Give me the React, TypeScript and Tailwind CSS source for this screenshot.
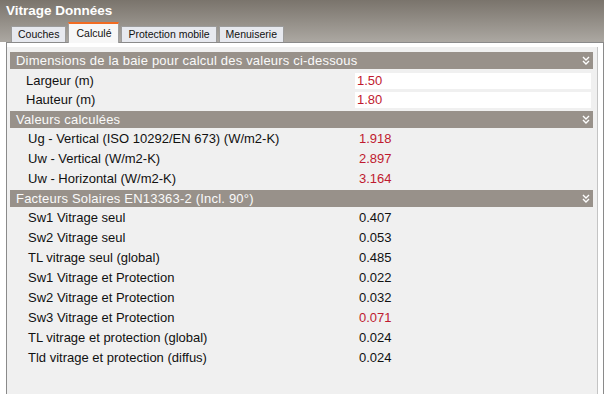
const font = "font-['Liberation_Sans',Arial,sans-serif]";

const tabs = ["Couches", "Calculé", "Protection mobile", "Menuiserie"];

const dimensions = [
  { label: "Largeur (m)", value: "1.50" },
  { label: "Hauteur (m)", value: "1.80" },
];

const calculated = [
  { label: "Ug - Vertical (ISO 10292/EN 673) (W/m2-K)", value: "1.918", red: true },
  { label: "Uw - Vertical (W/m2-K)", value: "2.897", red: true },
  { label: "Uw - Horizontal (W/m2-K)", value: "3.164", red: true },
];

const solar = [
  { label: "Sw1 Vitrage seul", value: "0.407" },
  { label: "Sw2 Vitrage seul", value: "0.053" },
  { label: "TL vitrage seul (global)", value: "0.485" },
  { label: "Sw1 Vitrage et Protection", value: "0.022" },
  { label: "Sw2 Vitrage et Protection", value: "0.032" },
  { label: "Sw3 Vitrage et Protection", value: "0.071", red: true },
  { label: "TL vitrage et protection (global)", value: "0.024" },
  { label: "Tld vitrage et protection (diffus)", value: "0.024" },
];

function Chevron() {
  return (
    <svg width="8" height="9" viewBox="0 0 8 9" className="shrink-0">
      <path d="M1 1 L4 4 L7 1 M1 5 L4 8 L7 5" fill="none" stroke="#fff" strokeWidth="1.4" />
    </svg>
  );
}

function Header({ title }: { title: string }) {
  return (
    <div className="h-[17px] bg-[#98918a] flex items-center justify-between pl-[6px] pr-[3px]">
      <span className="text-[13px] leading-none text-[#fafafa] tracking-[0.2px] whitespace-nowrap">{title}</span>
      <Chevron />
    </div>
  );
}

function ValueRow({ label, value, red }: { label: string; value: string; red?: boolean }) {
  return (
    <div className="h-[20px] flex items-center text-[13px] leading-none">
      <div className="w-[349px] pl-[18px] text-[#111] whitespace-nowrap">{label}</div>
      <div className={red ? "text-[#bf1a2f]" : "text-[#111]"}>{value}</div>
    </div>
  );
}

export default function App() {
  return (
    <div className={`w-[604px] h-[394px] overflow-hidden flex flex-col bg-white ${font}`}>
      <div className="h-[42px] shrink-0 bg-gradient-to-b from-[#7a746c] to-[#aca8a2]">
        <div className="h-[22px] pl-[6px] pt-[4px] text-[13.5px] leading-[14px] font-bold text-white">
          Vitrage Données
        </div>
        <div className="h-[20px] flex items-end pl-[11px] gap-[2px]">
          {tabs.map((t, i) =>
            i === 1 ? (
              <div
                key={t}
                className="relative z-10 h-[21px] mb-[-1px] px-[7px] bg-[#f7f7f7] border-x border-[#a0a0a0] border-t-2 border-t-[#f26b21] flex items-center text-[10.5px] text-[#111]"
              >
                {t}
              </div>
            ) : (
              <div
                key={t}
                className="h-[16px] px-[6px] bg-[#e7e9ef] border-x border-t border-[#9c9c9c] flex items-center text-[10.5px] text-[#111]"
              >
                {t}
              </div>
            )
          )}
        </div>
      </div>

      <div className="flex-1 ml-[6px] w-[598px] border-x border-t border-[#8a8a8a] bg-white pt-[4px] pr-[5px]">
        <div className="h-full bg-[#f0f0f0] border-r border-[#c4c4c4] pl-[3px] pr-[4px] pt-[5px]">
          <Header title="Dimensions de la baie pour calcul des valeurs ci-dessous" />
          <div className="py-[2px]">
            {dimensions.map((d) => (
              <div key={d.label} className="h-[19px] flex items-center text-[13px] leading-none">
                <div className="w-[345px] pl-[16px] text-[#111]">{d.label}</div>
                <div className="h-[16px] w-[236px] bg-white flex items-center pl-[2px] text-[#bf1a2f]">{d.value}</div>
              </div>
            ))}
          </div>

          <Header title="Valeurs calculées" />
          <div className="pb-[2px]">
            {calculated.map((r) => (
              <ValueRow key={r.label} {...r} />
            ))}
          </div>

          <Header title="Facteurs Solaires EN13363-2 (Incl. 90°)" />
          <div>
            {solar.map((r) => (
              <ValueRow key={r.label} {...r} />
            ))}
          </div>
        </div>
      </div>
    </div>
  );
}
